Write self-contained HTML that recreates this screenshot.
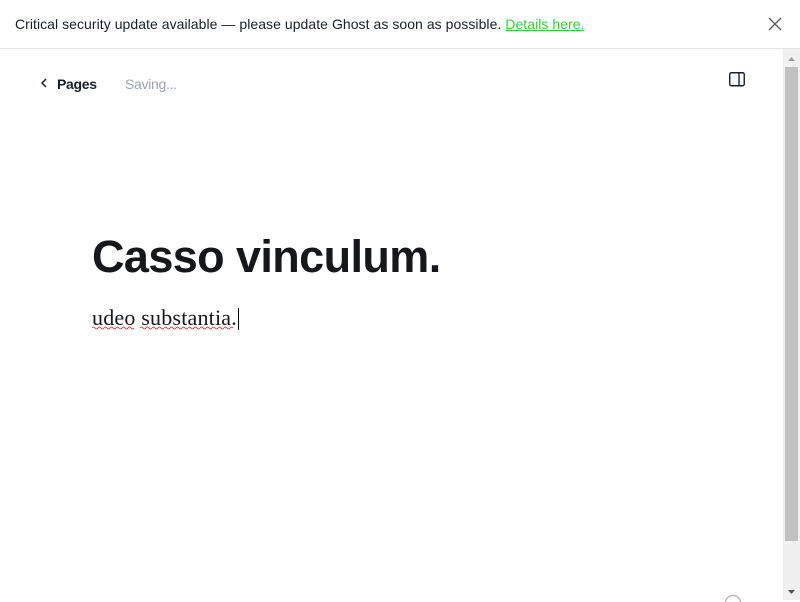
<!DOCTYPE html>
<html><head><style>
body{margin:0;width:800px;height:600px;overflow:hidden;background:#fff;font-family:"Liberation Sans",sans-serif;position:relative}
.bar{position:absolute;left:0;top:0;width:800px;height:48px;border-bottom:1px solid #e2e2e2;font-size:14px;color:#15212a}
.bar span.t{position:absolute;left:15px;top:16px;letter-spacing:0.05px}
.bar a{color:#30cf43;text-decoration:underline}
.x{position:absolute;left:767px;top:16px;width:16px;height:16px}
.sb{position:absolute;left:783px;top:49px;width:17px;height:551px;background:#f0f0f0}
.th{position:absolute;left:2px;top:18px;width:13px;height:474px;background:#c1c1c1}
.nav{position:absolute;top:76px;font-size:14px}
h1{position:absolute;left:92px;top:231px;margin:0;font-size:45px;font-weight:bold;color:#15171a;letter-spacing:-0.6px}
p{position:absolute;left:92px;top:305px;margin:0;font-family:"Liberation Serif",serif;font-size:22px;color:#15171a;letter-spacing:0.2px}
</style></head><body>
<div class="bar"><span class="t">Critical security update available — please update Ghost as soon as possible. <a>Details here.</a></span>
<svg class="x" viewBox="0 0 16 16"><path d="M2 2L14 14M14 2L2 14" stroke="#555" stroke-width="1.3"/></svg></div>
<div class="sb"><div class="th"></div>
<svg style="position:absolute;left:4px;top:7px" width="9" height="6"><path d="M1 5L4.5 1L8 5Z" fill="#a0a0a0"/></svg>
<svg style="position:absolute;left:4px;top:540px" width="9" height="6"><path d="M1 1L4.5 5L8 1Z" fill="#505050"/></svg></div>
<svg style="position:absolute;left:40px;top:78px" width="8" height="10"><path d="M6 1L2 5L6 9" stroke="#15212a" stroke-width="1.5" fill="none"/></svg>
<div class="nav" style="left:57px;color:#15212a;font-weight:bold;letter-spacing:-0.3px">Pages</div>
<div class="nav" style="left:125px;color:#9aa5b1;letter-spacing:-0.3px">Saving...</div>
<svg style="position:absolute;left:729px;top:72px" width="16" height="15"><rect x="0.75" y="0.75" width="14.5" height="13" rx="1.5" fill="none" stroke="#15212a" stroke-width="1.4"/><path d="M10 1V14" stroke="#15212a" stroke-width="1.4"/></svg>
<h1>Casso vinculum.</h1>
<p>udeo substantia.</p>
<svg style="position:absolute;left:92px;top:326px" width="145" height="4"><path d="M0 2 Q1.5 0 3 2 T6 2 T9 2 T12 2 T15 2 T18 2 T21 2 T24 2 T27 2 T30 2 T33 2 T36 2 T39 2 T42 2" stroke="#e02020" fill="none" stroke-width="0.8"/><path d="M48 2 Q49.5 0 51 2 T54 2 T57 2 T60 2 T63 2 T66 2 T69 2 T72 2 T75 2 T78 2 T81 2 T84 2 T87 2 T90 2 T93 2 T96 2 T99 2 T102 2 T105 2 T108 2 T111 2 T114 2 T117 2 T120 2 T123 2 T126 2 T129 2 T132 2 T135 2 T138 2 T141 2" stroke="#e02020" fill="none" stroke-width="0.8"/></svg>
<div style="position:absolute;left:238px;top:308px;width:1px;height:22px;background:#000"></div>
<svg style="position:absolute;left:724px;top:594px" width="18" height="8"><circle cx="9" cy="9" r="7.5" fill="none" stroke="#a8b0b8" stroke-width="1.2"/></svg>
</body></html>
